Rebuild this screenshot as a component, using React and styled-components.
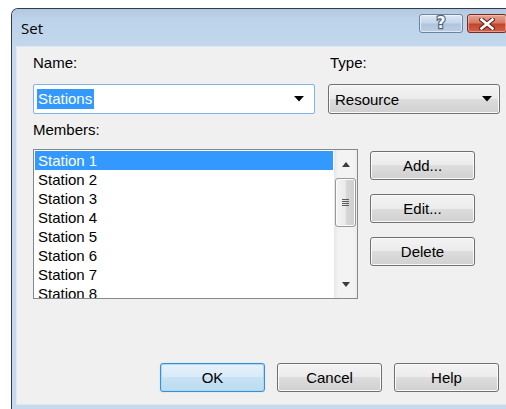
import styled, { createGlobalStyle, css } from "styled-components";

// Data
const members = [
  "Station 1",
  "Station 2",
  "Station 3",
  "Station 4",
  "Station 5",
  "Station 6",
  "Station 7",
  "Station 8",
];

// Icons
function DropArrow() {
  return (
    <svg width="10" height="6" viewBox="0 0 10 6">
      <path d="M0 0h10L5 5.5z" fill="#000" />
    </svg>
  );
}

function ScrollArrow({ up }) {
  return (
    <svg width="8" height="5" viewBox="0 0 8 5">
      <path d={up ? "M0 5h8L4 0z" : "M0 0h8L4 5z"} fill="#3d3d3d" />
    </svg>
  );
}

function CloseGlyph() {
  return (
    <svg width="16" height="12" viewBox="0 0 16 12">
      <path
        d="M2.5 1.5l11 9M13.5 1.5l-11 9"
        stroke="#5a1d14"
        strokeWidth="4.6"
        strokeLinecap="square"
      />
      <path
        d="M2.5 1.5l11 9M13.5 1.5l-11 9"
        stroke="#fff"
        strokeWidth="2.6"
        strokeLinecap="square"
      />
    </svg>
  );
}

// Component
function App() {
  return (
    <>
      <GlobalStyle />
      <Window>
        <TitleBar>
          <Title>Set</Title>
          <Caption>
            <HelpButton>?</HelpButton>
            <CloseButton>
              <CloseGlyph />
            </CloseButton>
          </Caption>
        </TitleBar>
        <Frame>
          <Client>
            <TopRow>
              <Field>
                <Label>Name:</Label>
                <EditCombo>
                  <Selected>Stations</Selected>
                  <DropArrow />
                </EditCombo>
              </Field>
              <Field>
                <Label indent>Type:</Label>
                <ListCombo>
                  <span>Resource</span>
                  <DropArrow />
                </ListCombo>
              </Field>
            </TopRow>
            <Label spaced>Members:</Label>
            <MembersRow>
              <ListBox>
                <Items>
                  {members.map((m, i) => (
                    <Item key={m} selected={i === 0}>
                      {m}
                    </Item>
                  ))}
                </Items>
                <ScrollBar>
                  <ScrollButton>
                    <ScrollArrow up />
                  </ScrollButton>
                  <Thumb>
                    <Grip />
                  </Thumb>
                  <Track />
                  <ScrollButton>
                    <ScrollArrow />
                  </ScrollButton>
                </ScrollBar>
              </ListBox>
              <SideButtons>
                <Button>Add...</Button>
                <Button>Edit...</Button>
                <Button>Delete</Button>
              </SideButtons>
            </MembersRow>
            <Footer>
              <Button primary>OK</Button>
              <Button>Cancel</Button>
              <Button>Help</Button>
            </Footer>
          </Client>
        </Frame>
      </Window>
    </>
  );
}

// Style
const GlobalStyle = createGlobalStyle`
  html, body {
    margin: 0;
    padding: 0;
    background: #fff;
    overflow: hidden;
  }
  body {
    font-family: "Liberation Sans", Arial, sans-serif;
  }
`;

const Window = styled.div`
  box-sizing: border-box;
  width: 520px;
  margin: 8px 0 0 11px;
  border: 1px solid #2f3c4c;
  border-bottom: none;
  border-radius: 7px 7px 0 0;
  background: #c6d9ee;
  overflow: hidden;
`;

const TitleBar = styled.div`
  height: 37px;
  display: flex;
  align-items: flex-start;
  justify-content: space-between;
  padding: 0 23px 0 9px;
  background: linear-gradient(#b4c9df, #bdd3ea 30%, #c2d7ec);
`;

const Title = styled.div`
  font-family: "Open Sans", "Noto Sans", sans-serif;
  font-size: 15px;
  line-height: 20px;
  margin-top: 9px;
  color: #000;
`;

const Caption = styled.div`
  display: flex;
  gap: 4px;
  margin-top: 5px;
`;

const captionBase = css`
  box-sizing: border-box;
  height: 19px;
  border-radius: 3px;
  display: flex;
  align-items: center;
  justify-content: center;
`;

const HelpButton = styled.div`
  ${captionBase}
  width: 44px;
  border: 1px solid #6d84a0;
  background: linear-gradient(#dce7f3, #c5d6e9 48%, #afc5dd 52%, #bccfe3);
  box-shadow: inset 0 0 0 1px rgba(255, 255, 255, 0.55);
  font-family: "DejaVu Sans", sans-serif;
  font-weight: bold;
  font-size: 15px;
  line-height: 17px;
  color: #f6f8fb;
  -webkit-text-stroke: 2.4px #56647a;
  paint-order: stroke fill;
`;

const CloseButton = styled.div`
  ${captionBase}
  width: 40px;
  border: 1px solid #7b2a1f;
  background: linear-gradient(#e6a597, #d57a65 45%, #c4442c 55%, #d0654c);
  box-shadow: inset 0 0 0 1px rgba(255, 220, 210, 0.45);
`;

const Frame = styled.div`
  padding: 0 4px 4px;
`;

const Client = styled.div`
  background: #f0f0f0;
  border: 1px solid #dfe8f3;
  padding: 7px 26px 12px 16px;
  font-size: 15px;
  color: #000;
`;

const TopRow = styled.div`
  display: flex;
  gap: 13px;
`;

const Field = styled.div`
  display: flex;
  flex-direction: column;
  gap: 12px;
`;

const Label = styled.div`
  line-height: 18px;
  padding-left: ${(p) => (p.indent ? "2px" : "0")};
  margin-top: ${(p) => (p.spaced ? "7px" : "0")};
`;

const comboBase = css`
  box-sizing: border-box;
  height: 30px;
  display: flex;
  align-items: center;
  justify-content: space-between;
`;

const EditCombo = styled.div`
  ${comboBase}
  width: 282px;
  padding: 0 10px 0 3px;
  background: #fff;
  border: 1px solid #7eb4ea;
  border-radius: 2px;
`;

const Selected = styled.span`
  background: #3399ff;
  color: #fff;
  line-height: 20px;
  padding: 0 2px 0 1px;
`;

const ListCombo = styled.div`
  ${comboBase}
  width: 172px;
  padding: 0 7px 0 6px;
  border: 1px solid #707070;
  border-radius: 3px;
  background: linear-gradient(#f3f3f3, #ebebeb 50%, #dddddd 50%, #d0d0d0);
  box-shadow: inset 0 0 0 1px #fafafa;
`;

const MembersRow = styled.div`
  display: flex;
  align-items: flex-start;
  gap: 12px;
  margin-top: 10px;
`;

const ListBox = styled.div`
  box-sizing: border-box;
  width: 325px;
  height: 150px;
  display: flex;
  border: 1px solid #828790;
  background: #fff;
`;

const Items = styled.div`
  flex: 1;
  padding: 1px;
  overflow: hidden;
`;

const Item = styled.div`
  height: 19px;
  line-height: 19px;
  padding-left: 3px;
  white-space: nowrap;
  ${(p) =>
    p.selected &&
    css`
      background: #3399ff;
      color: #fff;
    `}
`;

const ScrollBar = styled.div`
  width: 23px;
  display: flex;
  flex-direction: column;
  background: linear-gradient(to right, #e6e6e6, #f3f3f3 20%, #f3f3f3 80%, #ececec);
`;

const ScrollButton = styled.div`
  height: 28px;
  display: flex;
  align-items: center;
  justify-content: center;
`;

const Thumb = styled.div`
  box-sizing: border-box;
  height: 49px;
  margin: 0 1px;
  border: 1px solid #989898;
  border-radius: 3px;
  background: linear-gradient(to right, #f4f4f4, #e9e9e9 50%, #d8d8d8 51%, #cecece);
  box-shadow: inset 0 0 0 1px #fcfcfc;
  display: flex;
  align-items: center;
  justify-content: center;
`;

const Grip = styled.div`
  width: 7px;
  height: 7px;
  background: repeating-linear-gradient(#5a5a5a 0 1px, transparent 1px 2px);
`;

const Track = styled.div`
  flex: 1;
`;

const SideButtons = styled.div`
  display: flex;
  flex-direction: column;
  gap: 14px;
  margin-top: 2px;
`;

const Button = styled.button`
  box-sizing: border-box;
  width: 105px;
  height: 29px;
  padding: 0;
  border: 1px solid #707070;
  border-radius: 3px;
  background: linear-gradient(#f3f3f3, #ebebeb 50%, #dddddd 50%, #d0d0d0);
  box-shadow: inset 0 0 0 1px #fafafa;
  font-family: "Liberation Sans", Arial, sans-serif;
  font-size: 15px;
  color: #000;
  ${(p) =>
    p.primary &&
    css`
      border-color: #3c8fcf;
      background: linear-gradient(#e6f2fb, #d8ebf8 50%, #c7e2f4 50%, #bcdcf1);
      box-shadow: inset 0 0 0 1px #a9d9f5, 0 0 1px #6fc1ee;
    `}
`;

const Footer = styled.div`
  display: flex;
  justify-content: flex-end;
  gap: 12px;
  margin-top: 64px;
`;

export default App;
